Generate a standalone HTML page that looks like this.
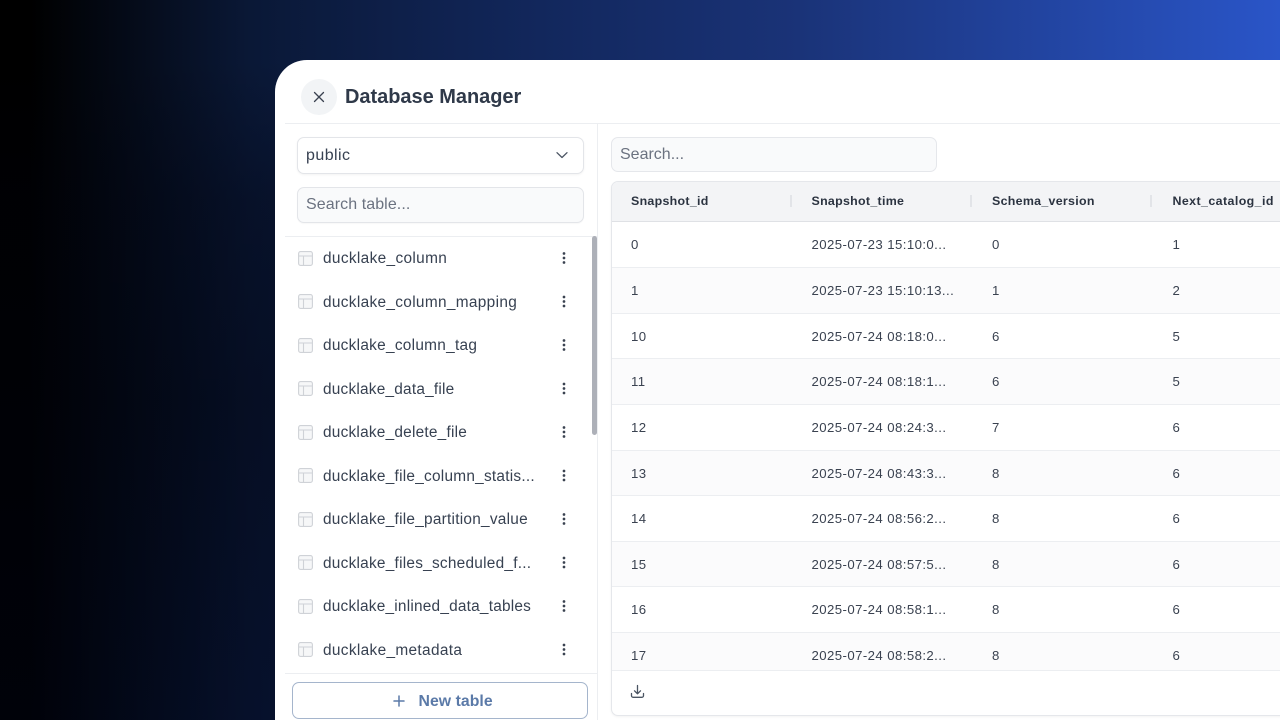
<!DOCTYPE html>
<html><head><meta charset="utf-8">
<style>
*{box-sizing:border-box}
html,body{margin:0;padding:0;width:1280px;height:720px;overflow:hidden;background:#000;font-family:"Liberation Sans",sans-serif}
.bg{position:absolute;inset:0;background:linear-gradient(180deg,rgba(0,0,0,0) 0,rgba(0,0,0,0) 60px,rgba(0,2,12,.32) 200px,rgba(0,2,12,.45) 400px,rgba(0,4,24,.38) 720px),linear-gradient(90deg,#000 30px,#0a1836 250px,#12275c 540px,#1a3378 800px,#2a55c8 1280px)}
.a{position:absolute;white-space:nowrap}
.panel{position:absolute;left:275px;top:60px;width:1005px;height:660px;background:#fff;border-top-left-radius:32px;overflow:hidden}
.l{position:absolute;background:#eceef1}
.t{position:absolute;white-space:nowrap;font-size:15.4px;line-height:20px;color:#374151;letter-spacing:.28px;margin-top:-9px}
.h{position:absolute;white-space:nowrap;font-size:12.4px;line-height:16px;font-weight:700;color:#2b3340;letter-spacing:.3px;top:133px}
.c{position:absolute;white-space:nowrap;font-size:13.2px;line-height:16px;color:#3a4250;letter-spacing:.42px;margin-top:-8px}
.stripe{position:absolute;left:337px;width:668px;background:#fbfbfc}
.rb{position:absolute;left:337px;width:668px;height:1px;background:#eceef1}
.sep{position:absolute;width:2px;height:12px;top:135px;background:#e2e4e8}
svg{position:absolute;overflow:visible}
</style></head>
<body>
<div class="bg"></div>
<div class="panel">
  <div class="l" style="left:10px;top:63px;width:995px;height:1px"></div>
  <div class="l" style="left:322px;top:64px;width:1px;height:596px"></div>

  <div class="a" style="left:26px;top:19px;width:36px;height:36px;border-radius:50%;background:#f2f4f6"></div>
  <svg style="left:26px;top:19px" width="36" height="36" viewBox="0 0 36 36" fill="none" stroke="#3a4250" stroke-width="1.3" stroke-linecap="round"><path d="M13.5 13.5l9 9M22.5 13.5l-9 9"/></svg>
  <div class="a" style="left:70px;top:25px;font-size:20px;line-height:25px;font-weight:700;color:#2f3949;letter-spacing:-.03px">Database Manager</div>

  <div class="a" style="left:22px;top:77px;width:287px;height:37px;border:1px solid #e3e5e9;border-radius:7px;background:#fff;box-shadow:0 1px 2px rgba(0,0,0,.05)"></div>
  <div class="t" style="left:31px;top:95px;font-size:16px;letter-spacing:.45px">public</div>
  <svg style="left:279px;top:90px" width="16" height="10" viewBox="0 0 16 10" fill="none" stroke="#4b5563" stroke-width="1.3" stroke-linecap="round" stroke-linejoin="round"><path d="M3 2.7l5 4.8 5-4.8"/></svg>

  <div class="a" style="left:22px;top:127px;width:287px;height:36px;border:1px solid #e3e5e9;border-radius:7px;background:#f9fafb;box-shadow:0 1px 1px rgba(0,0,0,.03)"></div>
  <div class="t" style="left:31px;top:144px;font-size:16px;letter-spacing:.08px;color:#6b7280">Search table...</div>

  <div class="l" style="left:10px;top:176px;width:312px;height:1px"></div>

  <!-- list -->
  <svg style="left:23px;top:190.5px" width="15" height="15" viewBox="0 0 15 15" fill="#f6f7f8" stroke="#cfd2d7" stroke-width="1.1"><rect x=".6" y=".6" width="13.8" height="13.8" rx="2"/><path d="M.6 5h13.8M5.5 5v9.4" fill="none"/></svg>
  <div class="t" style="left:48px;top:198px;letter-spacing:.35px">ducklake_column</div>
  <svg style="left:23px;top:234px" width="15" height="15" viewBox="0 0 15 15" fill="#f6f7f8" stroke="#cfd2d7" stroke-width="1.1"><rect x=".6" y=".6" width="13.8" height="13.8" rx="2"/><path d="M.6 5h13.8M5.5 5v9.4" fill="none"/></svg>
  <div class="t" style="left:48px;top:241.5px;letter-spacing:.33px">ducklake_column_mapping</div>
  <svg style="left:23px;top:277.5px" width="15" height="15" viewBox="0 0 15 15" fill="#f6f7f8" stroke="#cfd2d7" stroke-width="1.1"><rect x=".6" y=".6" width="13.8" height="13.8" rx="2"/><path d="M.6 5h13.8M5.5 5v9.4" fill="none"/></svg>
  <div class="t" style="left:48px;top:285px">ducklake_column_tag</div>
  <svg style="left:23px;top:321px" width="15" height="15" viewBox="0 0 15 15" fill="#f6f7f8" stroke="#cfd2d7" stroke-width="1.1"><rect x=".6" y=".6" width="13.8" height="13.8" rx="2"/><path d="M.6 5h13.8M5.5 5v9.4" fill="none"/></svg>
  <div class="t" style="left:48px;top:328.5px;letter-spacing:.22px">ducklake_data_file</div>
  <svg style="left:23px;top:364.5px" width="15" height="15" viewBox="0 0 15 15" fill="#f6f7f8" stroke="#cfd2d7" stroke-width="1.1"><rect x=".6" y=".6" width="13.8" height="13.8" rx="2"/><path d="M.6 5h13.8M5.5 5v9.4" fill="none"/></svg>
  <div class="t" style="left:48px;top:372px;letter-spacing:.23px">ducklake_delete_file</div>
  <svg style="left:23px;top:408px" width="15" height="15" viewBox="0 0 15 15" fill="#f6f7f8" stroke="#cfd2d7" stroke-width="1.1"><rect x=".6" y=".6" width="13.8" height="13.8" rx="2"/><path d="M.6 5h13.8M5.5 5v9.4" fill="none"/></svg>
  <div class="t" style="left:48px;top:415.5px;letter-spacing:.25px">ducklake_file_column_statis...</div>
  <svg style="left:23px;top:451.5px" width="15" height="15" viewBox="0 0 15 15" fill="#f6f7f8" stroke="#cfd2d7" stroke-width="1.1"><rect x=".6" y=".6" width="13.8" height="13.8" rx="2"/><path d="M.6 5h13.8M5.5 5v9.4" fill="none"/></svg>
  <div class="t" style="left:48px;top:459px;letter-spacing:.25px">ducklake_file_partition_value</div>
  <svg style="left:23px;top:495px" width="15" height="15" viewBox="0 0 15 15" fill="#f6f7f8" stroke="#cfd2d7" stroke-width="1.1"><rect x=".6" y=".6" width="13.8" height="13.8" rx="2"/><path d="M.6 5h13.8M5.5 5v9.4" fill="none"/></svg>
  <div class="t" style="left:48px;top:502.5px;letter-spacing:.25px">ducklake_files_scheduled_f...</div>
  <svg style="left:23px;top:538.5px" width="15" height="15" viewBox="0 0 15 15" fill="#f6f7f8" stroke="#cfd2d7" stroke-width="1.1"><rect x=".6" y=".6" width="13.8" height="13.8" rx="2"/><path d="M.6 5h13.8M5.5 5v9.4" fill="none"/></svg>
  <div class="t" style="left:48px;top:546px;letter-spacing:.22px">ducklake_inlined_data_tables</div>
  <svg style="left:23px;top:582px" width="15" height="15" viewBox="0 0 15 15" fill="#f6f7f8" stroke="#cfd2d7" stroke-width="1.1"><rect x=".6" y=".6" width="13.8" height="13.8" rx="2"/><path d="M.6 5h13.8M5.5 5v9.4" fill="none"/></svg>
  <div class="t" style="left:48px;top:589.5px;letter-spacing:.34px">ducklake_metadata</div>

  <!-- kebabs -->
  <svg style="left:286px;top:190px" width="6" height="410" viewBox="0 0 6 410" fill="#3a4250">
    <circle cx="3" cy="3.5" r="1.35"/><circle cx="3" cy="8" r="1.35"/><circle cx="3" cy="12.5" r="1.35"/>
    <circle cx="3" cy="47" r="1.35"/><circle cx="3" cy="51.5" r="1.35"/><circle cx="3" cy="56" r="1.35"/>
    <circle cx="3" cy="90.5" r="1.35"/><circle cx="3" cy="95" r="1.35"/><circle cx="3" cy="99.5" r="1.35"/>
    <circle cx="3" cy="134" r="1.35"/><circle cx="3" cy="138.5" r="1.35"/><circle cx="3" cy="143" r="1.35"/>
    <circle cx="3" cy="177.5" r="1.35"/><circle cx="3" cy="182" r="1.35"/><circle cx="3" cy="186.5" r="1.35"/>
    <circle cx="3" cy="221" r="1.35"/><circle cx="3" cy="225.5" r="1.35"/><circle cx="3" cy="230" r="1.35"/>
    <circle cx="3" cy="264.5" r="1.35"/><circle cx="3" cy="269" r="1.35"/><circle cx="3" cy="273.5" r="1.35"/>
    <circle cx="3" cy="308" r="1.35"/><circle cx="3" cy="312.5" r="1.35"/><circle cx="3" cy="317" r="1.35"/>
    <circle cx="3" cy="351.5" r="1.35"/><circle cx="3" cy="356" r="1.35"/><circle cx="3" cy="360.5" r="1.35"/>
    <circle cx="3" cy="395" r="1.35"/><circle cx="3" cy="399.5" r="1.35"/><circle cx="3" cy="404" r="1.35"/>
  </svg>

  <div class="a" style="left:317px;top:176px;width:5px;height:199px;background:#adb0b8;border-radius:3px"></div>

  <div class="l" style="left:10px;top:613px;width:312px;height:1px"></div>
  <div class="a" style="left:17px;top:622px;width:296px;height:37px;border:1px solid #a5b5cc;border-radius:7px;background:#fff"></div>
  <svg style="left:117px;top:634px" width="14" height="14" viewBox="0 0 14 14" fill="none" stroke="#5b7aa8" stroke-width="1.5" stroke-linecap="round"><path d="M7 2v10M2 7h10"/></svg>
  <div class="a" style="left:143.5px;top:631.5px;font-size:15.8px;line-height:20px;font-weight:700;color:#5b7aa8;letter-spacing:.05px">New table</div>

  <!-- search -->
  <div class="a" style="left:336px;top:77px;width:326px;height:35px;border:1px solid #e5e7eb;border-radius:7px;background:#f9fafb"></div>
  <div class="t" style="left:345px;top:94px;font-size:16px;letter-spacing:0;color:#6b7280">Search...</div>

  <!-- table -->
  <div class="a" style="left:336px;top:121px;width:700px;height:535px;border:1px solid #e5e7eb;border-radius:7px;background:#fff;box-shadow:0 1px 2px rgba(0,0,0,.05)"></div>
  <div class="a" style="left:337px;top:122px;width:668px;height:39px;background:#f3f4f6;border-top-left-radius:6px"></div>
  <div class="a" style="left:337px;top:161px;width:668px;height:1px;background:#dfe1e5"></div>

  <div class="stripe" style="top:208px;height:45px"></div>
  <div class="stripe" style="top:299px;height:45px"></div>
  <div class="stripe" style="top:390px;height:45px"></div>
  <div class="stripe" style="top:481px;height:45px"></div>
  <div class="stripe" style="top:572px;height:38px"></div>
  <div class="rb" style="top:207px"></div>
  <div class="rb" style="top:253px"></div>
  <div class="rb" style="top:298px"></div>
  <div class="rb" style="top:344px"></div>
  <div class="rb" style="top:390px"></div>
  <div class="rb" style="top:435px"></div>
  <div class="rb" style="top:481px"></div>
  <div class="rb" style="top:526px"></div>
  <div class="rb" style="top:572px"></div>
  <div class="rb" style="top:610px"></div>

  <div class="h" style="left:356px">Snapshot_id</div>
  <div class="sep" style="left:515px"></div>
  <div class="h" style="left:536.5px">Snapshot_time</div>
  <div class="sep" style="left:695px"></div>
  <div class="h" style="left:717px">Schema_version</div>
  <div class="sep" style="left:875px"></div>
  <div class="h" style="left:897.5px;letter-spacing:.42px">Next_catalog_id</div>

  <div class="c" style="left:356px;top:185px">0</div><div class="c" style="left:536.5px;top:185px">2025-07-23 15:10:0...</div><div class="c" style="left:717px;top:185px">0</div><div class="c" style="left:897.5px;top:185px">1</div>
  <div class="c" style="left:356px;top:231px">1</div><div class="c" style="left:536.5px;top:231px">2025-07-23 15:10:13...</div><div class="c" style="left:717px;top:231px">1</div><div class="c" style="left:897.5px;top:231px">2</div>
  <div class="c" style="left:356px;top:277px">10</div><div class="c" style="left:536.5px;top:277px">2025-07-24 08:18:0...</div><div class="c" style="left:717px;top:277px">6</div><div class="c" style="left:897.5px;top:277px">5</div>
  <div class="c" style="left:356px;top:322px">11</div><div class="c" style="left:536.5px;top:322px">2025-07-24 08:18:1...</div><div class="c" style="left:717px;top:322px">6</div><div class="c" style="left:897.5px;top:322px">5</div>
  <div class="c" style="left:356px;top:368px">12</div><div class="c" style="left:536.5px;top:368px">2025-07-24 08:24:3...</div><div class="c" style="left:717px;top:368px">7</div><div class="c" style="left:897.5px;top:368px">6</div>
  <div class="c" style="left:356px;top:414px">13</div><div class="c" style="left:536.5px;top:414px">2025-07-24 08:43:3...</div><div class="c" style="left:717px;top:414px">8</div><div class="c" style="left:897.5px;top:414px">6</div>
  <div class="c" style="left:356px;top:459px">14</div><div class="c" style="left:536.5px;top:459px">2025-07-24 08:56:2...</div><div class="c" style="left:717px;top:459px">8</div><div class="c" style="left:897.5px;top:459px">6</div>
  <div class="c" style="left:356px;top:505px">15</div><div class="c" style="left:536.5px;top:505px">2025-07-24 08:57:5...</div><div class="c" style="left:717px;top:505px">8</div><div class="c" style="left:897.5px;top:505px">6</div>
  <div class="c" style="left:356px;top:550px">16</div><div class="c" style="left:536.5px;top:550px">2025-07-24 08:58:1...</div><div class="c" style="left:717px;top:550px">8</div><div class="c" style="left:897.5px;top:550px">6</div>
  <div class="c" style="left:356px;top:596px">17</div><div class="c" style="left:536.5px;top:596px">2025-07-24 08:58:2...</div><div class="c" style="left:717px;top:596px">8</div><div class="c" style="left:897.5px;top:596px">6</div>

  <svg style="left:355px;top:624px" width="15" height="15" viewBox="0 0 15 15" fill="none" stroke="#4b5563" stroke-width="1.3" stroke-linecap="round" stroke-linejoin="round"><path d="M7.5 1.5v8M4.5 6.8l3 3 3-3M1.5 9.5v2.2a1.6 1.6 0 0 0 1.6 1.6h8.8a1.6 1.6 0 0 0 1.6-1.6V9.5"/></svg>
</div>
</body></html>
